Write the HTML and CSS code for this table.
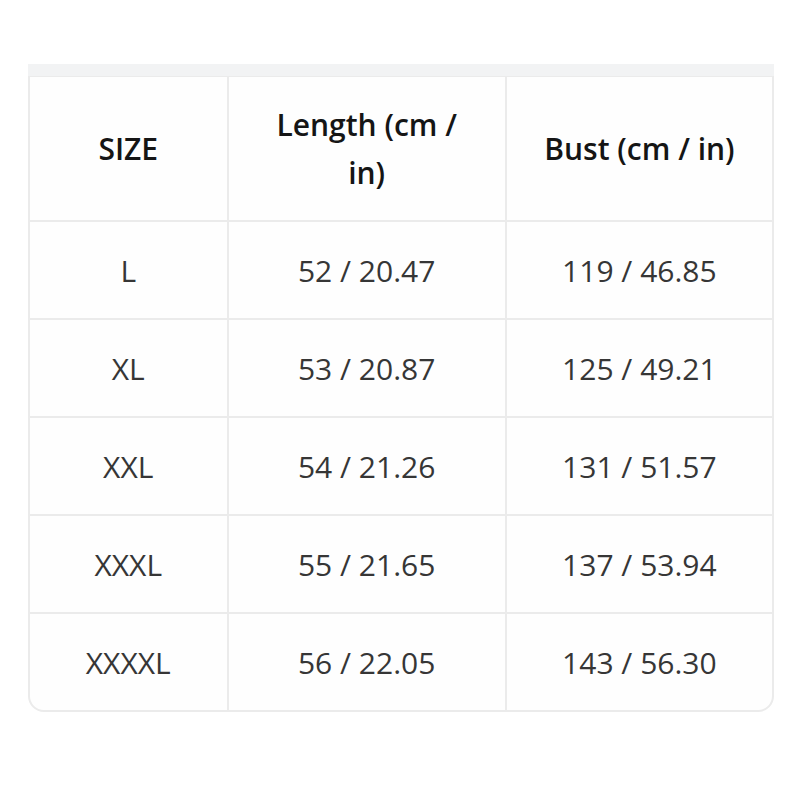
FILE: index.html
```html
<!DOCTYPE html>
<html>
<head>
<meta charset="utf-8">
<link rel="stylesheet" href="styles.css">
</head>
<body>
<div class="wrap">
  <div class="strip"></div>
  <table class="size-table">
    <colgroup>
      <col class="c1"><col class="c2"><col class="c3">
    </colgroup>
    <thead>
      <tr><th>SIZE</th><th>Length (cm /<br>in)</th><th>Bust (cm / in)</th></tr>
    </thead>
    <tbody>
      <tr><td>L</td><td>52 / 20.47</td><td>119 / 46.85</td></tr>
      <tr><td>XL</td><td>53 / 20.87</td><td>125 / 49.21</td></tr>
      <tr><td>XXL</td><td>54 / 21.26</td><td>131 / 51.57</td></tr>
      <tr><td>XXXL</td><td>55 / 21.65</td><td>137 / 53.94</td></tr>
      <tr><td>XXXXL</td><td>56 / 22.05</td><td>143 / 56.30</td></tr>
    </tbody>
  </table>
</div>
</body>
</html>
```

FILE: styles.css
```css
html, body {
  margin: 0;
  padding: 0;
  background: #ffffff;
}
.wrap {
  padding: 64px 26px 0 28px;
  font-family: "Open Sans", "Noto Sans", sans-serif;
}
.strip {
  height: 12px;
  background: #f2f3f4;
}
.size-table {
  width: 746px;
  border-collapse: separate;
  border-spacing: 0;
  border: 2px solid #ebebeb;
  border-top: 1px solid #ebebeb;
  border-radius: 0 0 16px 16px;
  overflow: hidden;
  background: #fefefe;
}
.c1 { width: 199px; }
.c2 { width: 279px; }
.c3 { width: 266px; }
th, td {
  text-align: center;
  vertical-align: middle;
  padding: 0;
  border-right: 2px solid #ebebeb;
  border-bottom: 2px solid #ebebeb;
}
th:last-child, td:last-child { border-right: none; }
tbody tr:last-child td { border-bottom: none; }
th {
  height: 143px;
  font-size: 30px;
  font-weight: 600;
  line-height: 48px;
  color: #151515;
}
td {
  height: 96px;
  font-size: 30px;
  font-weight: 400;
  color: #363636;
}
```
